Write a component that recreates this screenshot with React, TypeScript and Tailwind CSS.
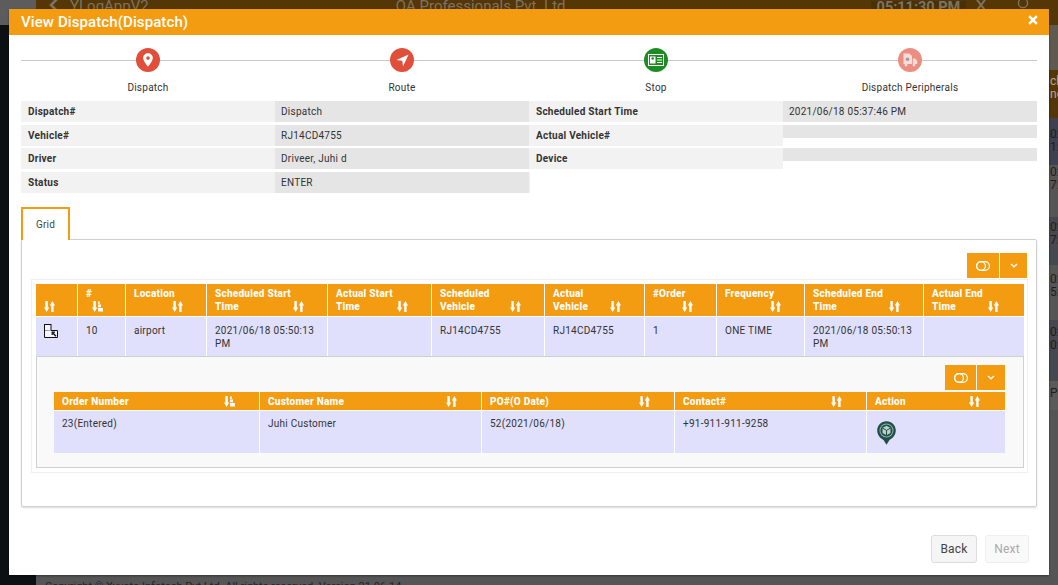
import React from "react";

const SortIcon = ({ active = false }: { active?: boolean }) => (
  <svg width="11" height="11" viewBox="0 0 11 11" className="shrink-0" fill="#fff">
    <path d="M1.4 0h2.4v6.6h1.4L2.6 11 0 6.6h1.4z" />
    {active ? (
      <path d="M6 0.5h1.8v2.4H6zM6 3.6h3v2.6H6zM6 6.9h5v3.6H6z" />
    ) : (
      <path d="M7.2 11h2.4V4.4H11L8.4 0 5.8 4.4h1.4z" />
    )}
  </svg>
);

const ToggleIcon = () => (
  <svg width="14" height="10" viewBox="0 0 14 10" fill="none" stroke="#fff" strokeWidth="1.2">
    <rect x="0.6" y="0.6" width="12.8" height="8.8" rx="4.4" />
    <circle cx="5" cy="5" r="4.4" />
  </svg>
);

const Chevron = () => (
  <svg width="8" height="5" viewBox="0 0 8 5" fill="none" stroke="#fff" strokeWidth="1.3">
    <path d="M1 1l3 2.8L7 1" />
  </svg>
);

const ToolButtons = ({ a, b }: { a: string; b: string }) => (
  <div className="flex justify-end gap-px">
    <button className={`${a} h-[25px] bg-[#f39c12] flex items-center justify-center`}>
      <ToggleIcon />
    </button>
    <button className={`${b} h-[25px] bg-[#f39c12] flex items-center justify-center`}>
      <Chevron />
    </button>
  </div>
);

const Step = ({ color, label, children }: { color: string; label: string; children: React.ReactNode }) => (
  <div className="flex flex-col items-center">
    <div className={`${color} w-6 h-6 rounded-full flex items-center justify-center`}>{children}</div>
    <div className="mt-[9px] text-[10px] leading-[13px] tracking-[0.25px] text-[#333]">{label}</div>
  </div>
);

const InfoRow = ({ mt, cells }: { mt: string; cells: string[] }) => (
  <div className={`${mt} grid grid-cols-4 items-start text-[10px] leading-[13px] tracking-[0.25px] text-[#333]`}>
    <div className="h-[21px] pl-[7px] pt-[4px] bg-[#f2f2f2] font-bold">{cells[0]}</div>
    <div className="h-[21px] pl-[6px] pt-[4px] bg-[#e5e5e5]">{cells[1]}</div>
    {cells[2] ? (
      <div className="h-[21px] pl-[7px] pt-[4px] bg-[#f2f2f2] font-bold">{cells[2]}</div>
    ) : (
      <div className="h-[21px] w-px bg-[#f2f2f2]" />
    )}
    {cells[3] ? (
      <div className="h-[21px] pl-[6px] pt-[4px] bg-[#e5e5e5]">{cells[3]}</div>
    ) : cells[2] ? (
      <div className="h-[13px] bg-[#e5e5e5]" />
    ) : (
      <div />
    )}
  </div>
);

const HeadCell = ({ w, lines, active, pr = "pr-[23px]" }: { w: string; lines: string[]; active?: boolean; pr?: string }) => (
  <th className={`${w} p-0 pl-[8px] bg-[#f39c12] border-r last:border-r-0 border-b border-white text-left align-top font-extrabold text-white`}>
    {lines.length === 2 ? (
      <div className="pt-[3px] h-[32px]">
        <div className="h-[13px] whitespace-nowrap">{lines[0]}</div>
        <div className={`${pr} flex justify-between items-center h-[13px] whitespace-nowrap`}>
          <span>{lines[1]}</span>
          <SortIcon active={active} />
        </div>
      </div>
    ) : (
      <div className={`${pr} flex justify-between items-center h-[18px] whitespace-nowrap`}>
        <span>{lines[0]}</span>
        <SortIcon active={active} />
      </div>
    )}
  </th>
);

const BodyCell = ({ children, h = "h-[39px]", pt = "pt-[7px]" }: { children?: React.ReactNode; h?: string; pt?: string }) => (
  <td className={`${h} ${pt} p-0 pl-[8px] pr-[6px] bg-[#e0e0fd] border-r last:border-r-0 border-white align-top font-normal text-[#333]`}>
    {children}
  </td>
);

const ExpandIcon = () => (
  <svg width="14" height="14" viewBox="0 0 14 14" fill="none" stroke="#111" strokeWidth="1">
    <rect x="0.5" y="0.5" width="6.5" height="6.5" fill="#f4f4ff" />
    <path d="M7 6.5h6.5v7h-13V7" fill="#f4f4ff" />
    <path d="M12 12.2L8.6 8.8" strokeWidth="1.4" />
    <path d="M8.2 11V8.2H11" strokeWidth="1.2" />
  </svg>
);

const BoxPin = () => (
  <svg width="19" height="24" viewBox="0 0 19 24">
    <path d="M9.5 0.2C4.3 0.2 0.2 4.3 0.2 9.5c0 4.8 3.6 8.2 6.3 9.4l3 4.9 3-4.9c2.7-1.2 6.3-4.6 6.3-9.4C18.8 4.3 14.7 0.2 9.5 0.2z" fill="#1f4f47" />
    <circle cx="9.5" cy="9.5" r="7" fill="#8fb0a9" />
    <circle cx="9.5" cy="9.5" r="6" fill="#1f4f47" />
    <path d="M9.5 4.8l4 2.3v4.8l-4 2.3-4-2.3V7.1z" fill="#b9d0cb" />
    <path d="M5.5 7.1l4 2.3 4-2.3M9.5 9.4v4.8" fill="none" stroke="#1f4f47" strokeWidth="1" />
  </svg>
);

const Back = () => (
  <svg width="10" height="16" viewBox="0 0 10 16" fill="none" stroke="#7d7363" strokeWidth="2.6">
    <path d="M8 2L2 8l6 6" />
  </svg>
);

const Strip = ({ h, bg, lines, color = "text-[#1e1e1e]", pt = "pt-[9px]" }: { h: string; bg: string; lines?: string[]; color?: string; pt?: string }) => (
  <div className={`${h} ${bg} ${color} ${pt} pl-[1px] shrink-0 text-[12px] leading-[13px] overflow-hidden whitespace-nowrap`}>
    {lines?.map((l) => <div key={l}>{l}</div>)}
  </div>
);

export default function App() {
  return (
    <div className="relative w-full h-[585px] overflow-hidden bg-[#0c1012] font-['Roboto',sans-serif]">
      <div className="flex h-full">
        <div className="w-[36px] shrink-0 flex flex-col">
          <div className="h-[25px] bg-[#5c5c5c]" />
          <div className="flex-1 bg-[#0c1012]" />
        </div>
        <div className="flex-1 flex flex-col min-w-0 bg-[#555]">
          <div className="h-[25px] shrink-0 bg-[#543607] flex items-start text-[#7d7363] text-[15px] leading-[14px] whitespace-nowrap">
            <div className="ml-[13px] -mt-[3px] w-[21px]"><Back /></div>
            <span className="-mt-[1px]">YLogAppV2</span>
            <span className="ml-[247px] -mt-[1px]">QA Professionals Pvt. Ltd</span>
            <span className="ml-[305px] mt-[1px] px-[6px] h-[14px] bg-[#47300a] font-bold text-[14.5px]">05:11:30 PM</span>
            <svg width="14" height="10" viewBox="0 0 14 10" className="ml-[8px]" fill="none" stroke="#7d7363" strokeWidth="2">
              <path d="M3 0l8 10M11 0L3 10" />
            </svg>
            <svg width="12" height="10" viewBox="0 0 12 10" className="ml-[29px]" fill="none" stroke="#7d7363" strokeWidth="1.4">
              <circle cx="6" cy="3" r="4.6" />
            </svg>
          </div>
          <div className="flex-1 flex justify-end min-h-0">
            <div className="w-[9px] flex flex-col">
              <Strip h="h-[45px]" bg="bg-[#5f5a50]" />
              <Strip h="h-[48px]" bg="bg-[#543607]" color="text-[#b9a88c]" pt="pt-[5px]" lines={["ch", "nc"]} />
              <Strip h="h-[47px]" bg="bg-[#3f4150]" pt="pt-[10px]" lines={["02", "1:"]} />
              <Strip h="h-[52px]" bg="bg-[#555]" pt="pt-[1px]" lines={["02", "7:"]} />
              <Strip h="h-[48px]" bg="bg-[#474750]" pt="pt-[4px]" lines={["02", "7:"]} />
              <Strip h="h-[55px]" bg="bg-[#555]" pt="pt-[8px]" lines={["02", "5:"]} />
              <Strip h="h-[61px]" bg="bg-[#474750]" pt="pt-[6px]" lines={["02", "0:"]} />
              <Strip h="h-[29px]" bg="bg-[#5a5a5a]" pt="pt-[6px]" lines={["Pr"]} />
              <div className="flex-1 bg-[#555]" />
            </div>
          </div>
          <div className="h-[10px] shrink-0 bg-[#555] pl-[9px] pt-[5px] text-[11px] leading-[14px] text-[#20262c] whitespace-nowrap overflow-hidden">
            Copyright © Xyvoto Infotech Pvt Ltd. All rights reserved. Version 21.06.14
          </div>
        </div>
      </div>

      <div className="absolute left-[9px] top-[9px] w-[1040px] h-[566px] bg-white flex flex-col shadow-[0_1px_2px_rgba(0,0,0,0.4)]">
        <div className="h-[26px] shrink-0 bg-[#f39c12] pl-[12px] pr-[11px] flex items-center justify-between text-white">
          <span className="text-[15px] font-medium tracking-[0.1px]">View Dispatch(Dispatch)</span>
          <svg width="10" height="10" viewBox="0 0 10 10" className="mb-[5px]" stroke="#fff" strokeWidth="2.6">
            <path d="M1.2 1.2l7.6 7.6M8.8 1.2L1.2 8.8" />
          </svg>
        </div>

        <div className="px-[12px] flex-1 flex flex-col">
          <div className="relative pt-[13px] h-[66px] shrink-0">
            <div className="absolute left-0 right-0 top-[25px] h-px bg-[#c8c8c8]" />
            <div className="relative grid grid-cols-4">
              <Step color="bg-[#df4f3a]" label="Dispatch">
                <svg width="10" height="14" viewBox="0 0 10 14">
                  <path fillRule="evenodd" fill="#fff" d="M5 0.3C2.3 0.3 0.2 2.4 0.2 5c0 3.4 4.8 8.7 4.8 8.7S9.8 8.4 9.8 5C9.8 2.4 7.7 0.3 5 0.3zM5 3.3a1.8 1.8 0 1 1 0 3.6 1.8 1.8 0 0 1 0-3.6z" />
                </svg>
              </Step>
              <Step color="bg-[#df4f3a]" label="Route">
                <svg width="13" height="13" viewBox="0 0 13 13">
                  <path fill="#fff" d="M12.6 0.4L0.4 6l5.9 0.7.7 5.9z" />
                </svg>
              </Step>
              <Step color="bg-[#1f8c23]" label="Stop">
                <svg width="16" height="12" viewBox="0 0 16 12">
                  <rect x="0.5" y="0.5" width="15" height="11" fill="none" stroke="#fff" />
                  <path fill="#fff" d="M2 2.5h5.5v7H2zM9 3h5v1H9zM9 5.5h5v1H9zM9 8h5v1H9z" />
                  <circle cx="4.7" cy="4.5" r="1.3" fill="#1f8c23" />
                </svg>
              </Step>
              <Step color="bg-[#ec8d81]" label="Dispatch Peripherals">
                <svg width="16" height="14" viewBox="0 0 16 14">
                  <path fill="#f7dcd7" d="M1.5 0.5h6l2.5 2.5v8H1.5z" />
                  <circle cx="5.5" cy="6.2" r="1.8" fill="#a99a97" />
                  <path fill="#f7dcd7" d="M10.8 5.5h2.4l2 2.5v3h-4.4z" />
                  <circle cx="4" cy="12" r="1.4" fill="#f7dcd7" />
                  <circle cx="12" cy="12" r="1.4" fill="#f7dcd7" />
                </svg>
              </Step>
            </div>
          </div>

          <InfoRow mt="mt-0" cells={["Dispatch#", "Dispatch", "Scheduled Start Time", "2021/06/18 05:37:46 PM"]} />
          <InfoRow mt="mt-[3px]" cells={["Vehicle#", "RJ14CD4755", "Actual Vehicle#", ""]} />
          <InfoRow mt="mt-[2px]" cells={["Driver", "Driveer, Juhi d", "Device", ""]} />
          <InfoRow mt="mt-[3px]" cells={["Status", "ENTER", "", ""]} />

          <div className="mt-[14px] relative z-10 -mb-px w-[49px] h-[33px] bg-white border-t-2 border-x-2 border-[#f39c12] pl-[13px] pt-[9px] text-[10px] leading-[13px] tracking-[0.2px] text-[#444]">
            Grid
          </div>
          <div className="h-[268px] border border-[#d0d0d0] rounded-[2px] shadow-[0_1px_2px_rgba(0,0,0,0.15)] pt-[13px] pl-[9px] pr-[8px]">
            <div className="pr-px">
              <ToolButtons a="w-[32px]" b="w-[27px]" />
            </div>
            <div className="mt-px h-[194px] border border-[#f0f0f0] pl-[4px] pr-[3px] pt-[4px]">
              <table className="table-fixed border-separate border-spacing-0 w-[988px] text-[10px] leading-[13px] tracking-[0.25px]">
                <thead>
                  <tr>
                    <HeadCell w="w-[42px]" lines={["", ""]} pr="pr-[23px]" />
                    <HeadCell w="w-[48px]" lines={["#", ""]} active pr="pr-[22px]" />
                    <HeadCell w="w-[81px]" lines={["Location", ""]} pr="pr-[23px]" />
                    <HeadCell w="w-[121px]" lines={["Scheduled Start", "Time"]} />
                    <HeadCell w="w-[104px]" lines={["Actual Start", "Time"]} />
                    <HeadCell w="w-[113px]" lines={["Scheduled", "Vehicle"]} />
                    <HeadCell w="w-[100px]" lines={["Actual", "Vehicle"]} />
                    <HeadCell w="w-[72px]" lines={["#Order", ""]} />
                    <HeadCell w="w-[88px]" lines={["Frequency", ""]} />
                    <HeadCell w="w-[119px]" lines={["Scheduled End", "Time"]} />
                    <HeadCell w="w-[100px]" lines={["Actual End", "Time"]} pr="pr-[25px]" />
                  </tr>
                </thead>
                <tbody>
                  <tr>
                    <BodyCell><ExpandIcon /></BodyCell>
                    <BodyCell>10</BodyCell>
                    <BodyCell>airport</BodyCell>
                    <BodyCell>2021/06/18 05:50:13 PM</BodyCell>
                    <BodyCell />
                    <BodyCell>RJ14CD4755</BodyCell>
                    <BodyCell>RJ14CD4755</BodyCell>
                    <BodyCell>1</BodyCell>
                    <BodyCell>ONE TIME</BodyCell>
                    <BodyCell>2021/06/18 05:50:13 PM</BodyCell>
                    <BodyCell />
                  </tr>
                  <tr>
                    <td colSpan={11} className="p-0">
                      <div className="h-[112px] bg-[#f9f9f9] border border-[#d0d0d0] pl-[17px] pr-[18px] pt-[8px]">
                        <ToolButtons a="w-[31px]" b="w-[28px]" />
                        <table className="mt-[2px] table-fixed border-separate border-spacing-0 w-[951px]">
                          <thead>
                            <tr>
                              <HeadCell w="w-[206px]" lines={["Order Number"]} active pr="pr-[24px]" />
                              <HeadCell w="w-[222px]" lines={["Customer Name"]} pr="pr-[24px]" />
                              <HeadCell w="w-[193px]" lines={["PO#(O Date)"]} pr="pr-[24px]" />
                              <HeadCell w="w-[192px]" lines={["Contact#"]} pr="pr-[24px]" />
                              <HeadCell w="w-[138px]" lines={["Action"]} pr="pr-[25px]" />
                            </tr>
                          </thead>
                          <tbody>
                            <tr>
                              <BodyCell h="h-[42px]" pt="pt-[6px]">23(Entered)</BodyCell>
                              <BodyCell h="h-[42px]" pt="pt-[6px]">Juhi Customer</BodyCell>
                              <BodyCell h="h-[42px]" pt="pt-[6px]">52(2021/06/18)</BodyCell>
                              <BodyCell h="h-[42px]" pt="pt-[6px]">+91-911-911-9258</BodyCell>
                              <BodyCell h="h-[42px]" pt="pt-[6px]"><div className="mt-[4px] ml-[2px]"><BoxPin /></div></BodyCell>
                            </tr>
                          </tbody>
                        </table>
                      </div>
                    </td>
                  </tr>
                </tbody>
              </table>
            </div>
          </div>

          <div className="mt-[28px] flex justify-end gap-[8px] pr-[8px]">
            <button className="w-[46px] h-[28px] rounded-[3px] bg-[#f5f5f5] border border-[#ddd] text-[12px] tracking-[0.2px] text-[#444]">Back</button>
            <button className="w-[44px] h-[28px] rounded-[3px] bg-[#f9f9f9] border border-[#eee] text-[12px] tracking-[0.2px] text-[#aaa]">Next</button>
          </div>
        </div>
      </div>
    </div>
  );
}
